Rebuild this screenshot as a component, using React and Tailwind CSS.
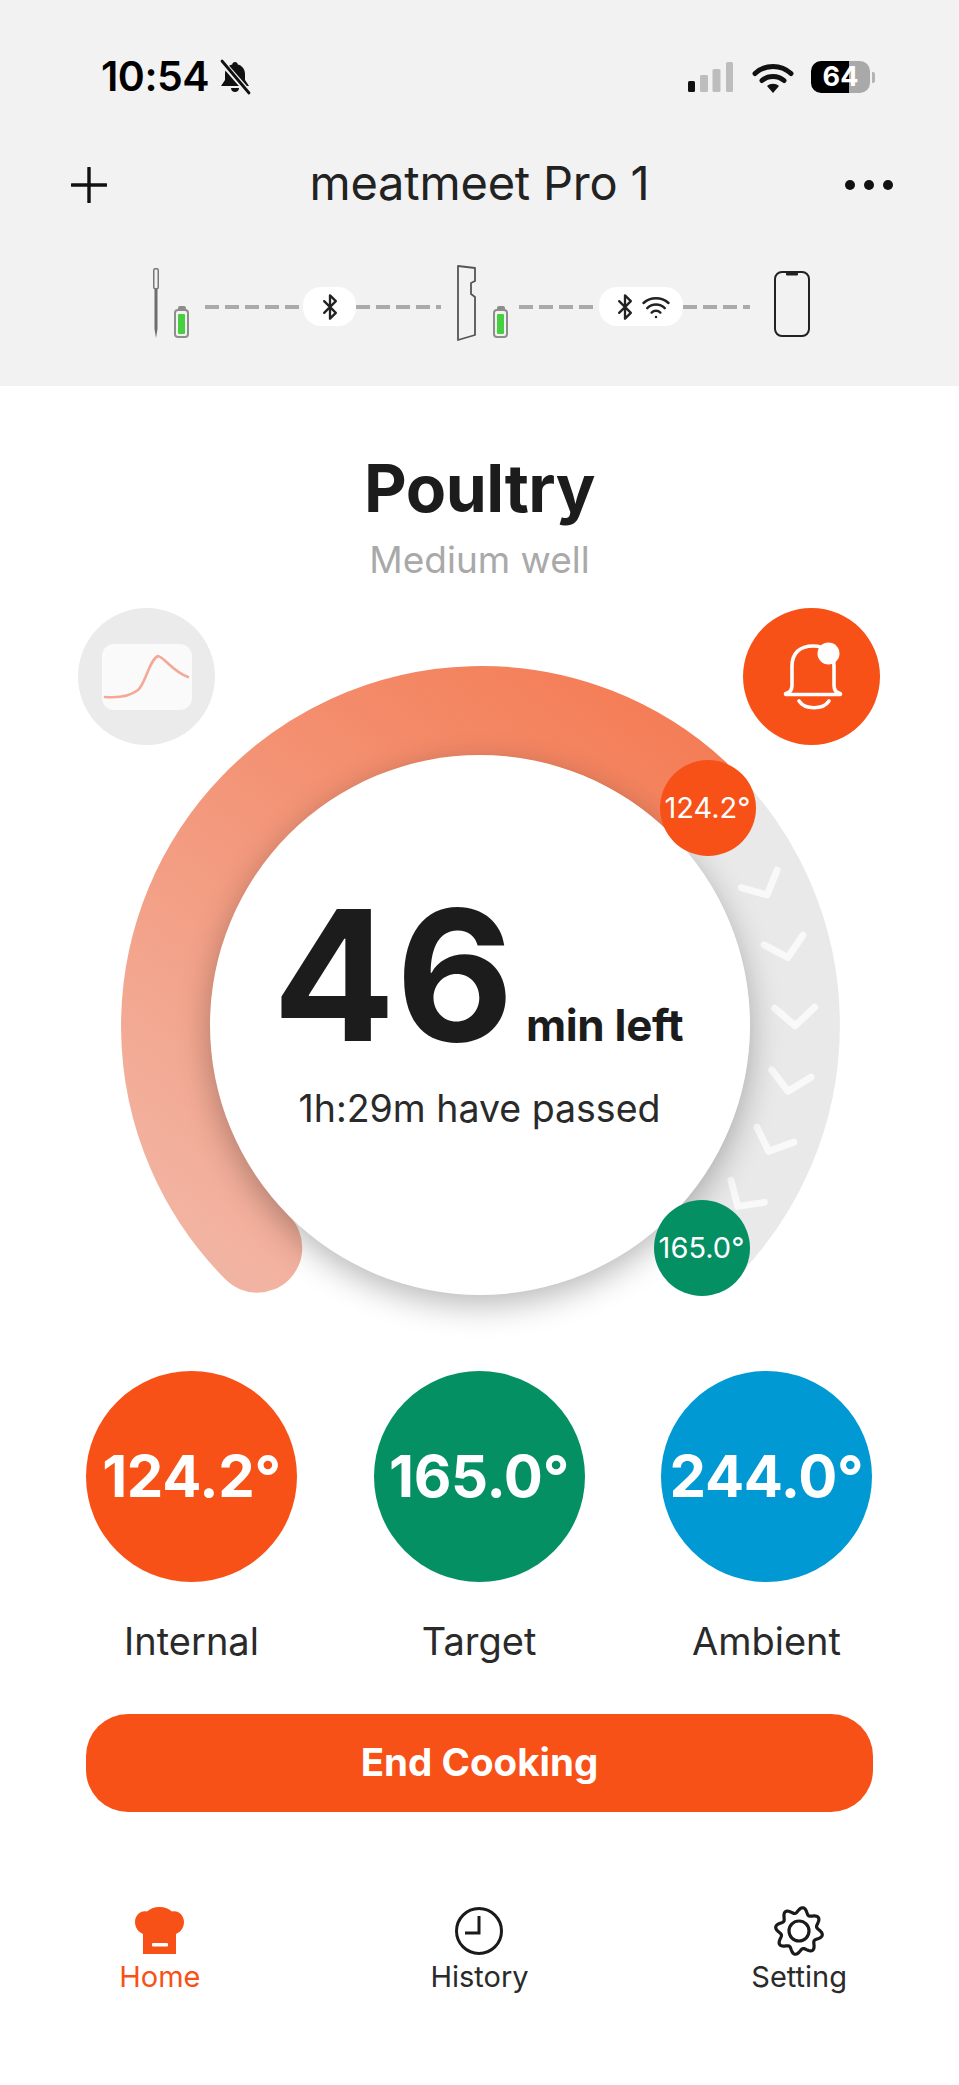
import React from "react";
import { Bluetooth, Wifi } from "lucide-react";

const chevrons = [-26, -14, -1.5, 10.5, 22, 33.5];

function gearPath() {
  const pts = [];
  const off = (10 * Math.PI) / 180;
  for (let i = 0; i < 180; i++) {
    const t = (i / 180) * Math.PI * 2;
    const r = 20.8 + 2.8 * Math.cos(8 * (t - off));
    pts.push(`${(24 + r * Math.sin(t)).toFixed(2)} ${(24 - r * Math.cos(t)).toFixed(2)}`);
  }
  return "M" + pts.join("L") + "Z";
}

function Dashes({ className }) {
  return <div className={"mt-[40px] h-[4px] bg-[repeating-linear-gradient(90deg,#aaaaaa_0_14px,transparent_14px_20px)] " + className} />;
}

function MiniBattery() {
  return (
    <div className="mt-[41px] flex h-[32px] w-[15px] flex-col items-center">
      <div className="h-[3px] w-[8px] rounded-t-[2px] bg-[#8d8d8d]" />
      <div className="flex h-[29px] w-[15px] items-center justify-center rounded-[4px] border-[2px] border-[#8d8d8d] bg-[#f2f2f2]">
        <div className="h-[20px] w-[7px] rounded-[1px] bg-[#46cf3f]" />
      </div>
    </div>
  );
}

function Temp({ value, label, color }) {
  return (
    <div className="flex w-[211px] flex-col items-center">
      <div className={"flex h-[211px] w-[211px] items-center justify-center rounded-full text-[58px] font-bold tracking-[-0.3px] text-white " + color}>
        {value}
      </div>
      <div className="mt-[37px] flex h-[44px] items-center text-[38px] whitespace-nowrap text-[#2a2a2a]">{label}</div>
    </div>
  );
}

export default function App() {
  return (
    <div className="h-[2085px] w-[959px] overflow-hidden bg-white font-['Inter',sans-serif] text-[#1c1c1c]">
      <header className="h-[386px] bg-[#f2f2f2] pt-[45px]">
        <div className="flex h-[64px] items-center justify-between pl-[101px] pr-[84px]">
          <div className="flex items-center gap-[8px]">
            <span className="text-[41px] font-semibold tracking-[-0.5px] text-black">10:54</span>
            <svg width="36" height="36" viewBox="0 0 36 36">
              <path d="M18 3c1.600 0 2.600 1 2.800 2.400C25.500 6.600 28 10.500 28 15v6l4 6H4l4-6v-6c0-4.500 2.500-8.400 7.200-9.600C15.400 4 16.400 3 18 3z" fill="#111" />
              <path d="M14 29h8c0 2.500-1.800 4-4 4s-4-1.500-4-4z" fill="#111" />
              <path d="M4 2l28 32" stroke="#f2f2f2" strokeWidth="6" />
              <path d="M5 2l27 32" stroke="#111" strokeWidth="2.800" strokeLinecap="round" />
            </svg>
          </div>
          <div className="flex items-center">
            <svg width="46" height="31" viewBox="0 0 46 31">
              <rect x="0" y="19" width="7" height="11" rx="1.500" fill="#111" />
              <rect x="12" y="13" width="8" height="17" rx="1.500" fill="#bdbdbd" />
              <rect x="24.500" y="7" width="8" height="23" rx="1.500" fill="#bdbdbd" />
              <rect x="38" y="0" width="7" height="30" rx="1.500" fill="#bdbdbd" />
            </svg>
            <svg className="ml-[18px]" width="42" height="31" viewBox="0 0 42 31">
              <path d="M3 11.500C13 2 29 2 39 11.500" fill="none" stroke="#111" strokeWidth="5" strokeLinecap="round" />
              <path d="M10 18.500C16 13 26 13 32 18.500" fill="none" stroke="#111" strokeWidth="5" strokeLinecap="round" />
              <path d="M15 24c3.500-3 8.500-3 12 0l-6 7z" fill="#111" />
            </svg>
            <div className="ml-[17px] flex items-center">
              <div className="flex h-[32px] w-[59px] items-center justify-center rounded-[10px] bg-[linear-gradient(90deg,#000_0_64%,#a9a9a9_64%_100%)] text-[27px] font-bold text-white">64</div>
              <div className="ml-[2px] h-[11px] w-[3px] rounded-r-[2px] bg-[#b5b5b5]" />
            </div>
          </div>
        </div>
        <div className="mt-[44px] grid h-[64px] grid-cols-[1fr_auto_1fr] items-center px-[66px]">
          <svg className="ml-[5px]" width="36" height="36" viewBox="0 0 36 36">
            <path d="M18 1v34M1 18h34" stroke="#111" strokeWidth="3.400" strokeLinecap="round" />
          </svg>
          <div className="pb-[6px] text-[47px] leading-none font-normal tracking-[-0.2px] text-[#222]">meatmeet Pro 1</div>
          <div className="flex gap-[9px] justify-self-end">
            <div className="h-[10px] w-[10px] rounded-full bg-[#111]" />
            <div className="h-[10px] w-[10px] rounded-full bg-[#111]" />
            <div className="h-[10px] w-[10px] rounded-full bg-[#111]" />
          </div>
        </div>
        <div className="mt-[48px] flex h-[76px] items-start pl-[153px]">
          <svg className="mt-[3px]" width="6" height="70" viewBox="0 0 6 70">
            <rect x="0.750" y="0.750" width="4.500" height="20" rx="1.500" fill="#f2f2f2" stroke="#777" strokeWidth="1.500" />
            <path d="M1.500 21h3v40L3 70 1.500 61z" fill="#6d6d6d" />
          </svg>
          <div className="ml-[15px]"><MiniBattery /></div>
          <Dashes className="ml-[16px] w-[98px]" />
          <div className="mt-[22px] flex h-[39px] w-[53px] items-center justify-center rounded-[18px] bg-white">
            <Bluetooth size={28} strokeWidth={2} color="#222" />
          </div>
          <Dashes className="w-[85px]" />
          <svg className="ml-[16px]" width="19" height="76" viewBox="0 0 19 76">
            <path d="M1 1l17 2v13l-4 2v11l4 3v38l-17 5z" fill="#f2f2f2" stroke="#555" strokeWidth="1.800" strokeLinejoin="round" />
          </svg>
          <div className="ml-[17px]"><MiniBattery /></div>
          <Dashes className="ml-[11px] w-[80px]" />
          <div className="mt-[22px] flex h-[39px] w-[84px] items-center justify-center gap-[2px] rounded-[18px] bg-white">
            <Bluetooth size={28} strokeWidth={2} color="#222" />
            <Wifi size={30} strokeWidth={2} color="#222" />
          </div>
          <Dashes className="w-[67px]" />
          <svg className="ml-[24px] mt-[6px]" width="36" height="66" viewBox="0 0 36 66">
            <rect x="1" y="1" width="34" height="64" rx="7" fill="#f2f2f2" stroke="#222" strokeWidth="2" />
            <rect x="12" y="1" width="12" height="3.500" rx="1" fill="#222" />
          </svg>
        </div>
      </header>

      <main>
        <h1 className="mt-[62px] flex h-[80px] items-center justify-center text-[66px] font-bold tracking-[-0.5px] text-[#1c1c1c]">Poultry</h1>
        <div className="mt-[10px] flex h-[44px] items-center justify-center text-[37px] text-[#a9a9a9]">Medium well</div>

        <div className="relative z-10 mt-[26px] flex justify-between pl-[78px] pr-[79px]">
          <div className="flex h-[137px] w-[137px] items-center justify-center rounded-full bg-[#ebebeb]">
            <div className="h-[66px] w-[90px] rounded-[12px] bg-[#fafafa]">
              <svg width="90" height="66" viewBox="0 0 90 66">
                <path d="M3 53c12 1 24 0 33-7 8-7 11-30 20-34 6 1 15 16 30 21" fill="none" stroke="#f6a898" strokeWidth="2.600" strokeLinecap="round" />
              </svg>
            </div>
          </div>
          <div className="flex h-[137px] w-[137px] items-center justify-center rounded-full bg-[#f75118]">
            <svg width="66" height="74" viewBox="0 0 66 74">
              <path d="M8 53c4-1 5-4 5-8V26C13 13 21 6 34 6s21 7 21 20v19c0 4 1 7 5 8 2 .5 2 1.500 0 1.500H8c-2 0-2-1-0-1.500z" fill="none" stroke="#fff" strokeWidth="3.600" strokeLinejoin="round" />
              <path d="M20 61c6 9 24 9 30 0" fill="none" stroke="#fff" strokeWidth="3.600" strokeLinecap="round" />
              <circle cx="49.500" cy="13.500" r="11" fill="#fff" />
            </svg>
          </div>
        </div>

        <div className="relative mx-auto mt-[-80px] flex h-[720px] w-[720px] items-center justify-center">
          <svg className="absolute inset-0" width="720" height="720" viewBox="0 0 720 720">
            <defs>
              <linearGradient id="ringGrad" gradientUnits="userSpaceOnUse" x1="560" y1="40" x2="130" y2="620">
                <stop offset="0" stopColor="#f47c55" />
                <stop offset="1" stopColor="#f2b4a2" />
              </linearGradient>
            </defs>
            <path d="M582.700 137.300A315 315 0 0 1 582.700 582.700" fill="none" stroke="#e9e9e9" strokeWidth="90" />
            {chevrons.map((a) => (
              <polyline
                key={a}
                points="655,-9 675,9 695,-9"
                transform={`translate(0 360) rotate(${a} 360 0)`}
                fill="none"
                stroke="#ffffff"
                strokeOpacity="0.7"
                strokeWidth="7"
                strokeLinecap="round"
                strokeLinejoin="round"
              />
            ))}
            <path d="M137.300 582.700A315 315 0 0 1 574.800 129.600" fill="none" stroke="url(#ringGrad)" strokeWidth="90" strokeLinecap="round" />
          </svg>
          <div className="relative flex h-[540px] w-[540px] flex-col items-center rounded-full bg-white shadow-[0_10px_32px_rgba(0,0,0,0.28)]">
            <div className="mr-[3px] mt-[120px] flex items-baseline">
              <span className="text-[182px] leading-[200px] font-bold tracking-[0px] text-[#1c1c1c]">46</span>
              <span className="ml-[12px] text-[44px] font-bold tracking-[-0.3px] text-[#1c1c1c]">min left</span>
            </div>
            <div className="mt-[6px] text-[37.500px] text-[#2a2a2a]">1h:29m have passed</div>
          </div>
          <div className="absolute left-[540px] top-[95px] flex h-[96px] w-[96px] items-center justify-center rounded-full bg-[#f75118] text-[29px] text-white">124.2°</div>
          <div className="absolute left-[534px] top-[535px] flex h-[96px] w-[96px] items-center justify-center rounded-full bg-[#049063] text-[29px] text-white">165.0°</div>
        </div>

        <div className="mt-[-14px] flex justify-between pl-[86px] pr-[87px]">
          <Temp value="124.2°" label="Internal" color="bg-[#f75118]" />
          <Temp value="165.0°" label="Target" color="bg-[#049063]" />
          <Temp value="244.0°" label="Ambient" color="bg-[#0099d3]" />
        </div>

        <button className="mx-[86px] mt-[51px] flex h-[98px] w-[787px] items-center justify-center rounded-[42px] bg-[#f75118] text-[38.500px] font-bold text-white">End Cooking</button>

        <nav className="mt-[95px] grid grid-cols-3">
          <div className="flex flex-col items-center">
            <svg width="49" height="48" viewBox="0 0 49 48">
              <path d="M8 47V27C3 25 0 20 0 15 0 8 6 3 12 4.500 15 2 19 0 24.500 0S34 2 37 4.500C43 3 49 8 49 15c0 5-3 10-8 12v20z" fill="#f75118" />
              <rect x="17" y="36" width="16" height="3.500" rx="1" fill="#fff" />
            </svg>
            <span className="mt-[4px] flex h-[36px] items-center text-[29px] text-[#f75118]">Home</span>
          </div>
          <div className="flex flex-col items-center">
            <svg width="48" height="48" viewBox="0 0 48 48">
              <circle cx="24" cy="24" r="22.500" fill="none" stroke="#1a1a1a" strokeWidth="3" />
              <path d="M24 9v17H10" fill="none" stroke="#1a1a1a" strokeWidth="3" />
            </svg>
            <span className="mt-[4px] flex h-[36px] items-center text-[29px] text-[#2a2a2a]">History</span>
          </div>
          <div className="flex flex-col items-center">
            <svg className="overflow-visible" width="48" height="48" viewBox="0 0 48 48">
              <path d={gearPath()} fill="none" stroke="#1a1a1a" strokeWidth="3.200" strokeLinejoin="round" />
              <circle cx="24" cy="24" r="10" fill="none" stroke="#1a1a1a" strokeWidth="3.200" />
            </svg>
            <span className="mt-[4px] flex h-[36px] items-center text-[29px] text-[#2a2a2a]">Setting</span>
          </div>
        </nav>
      </main>
    </div>
  );
}
